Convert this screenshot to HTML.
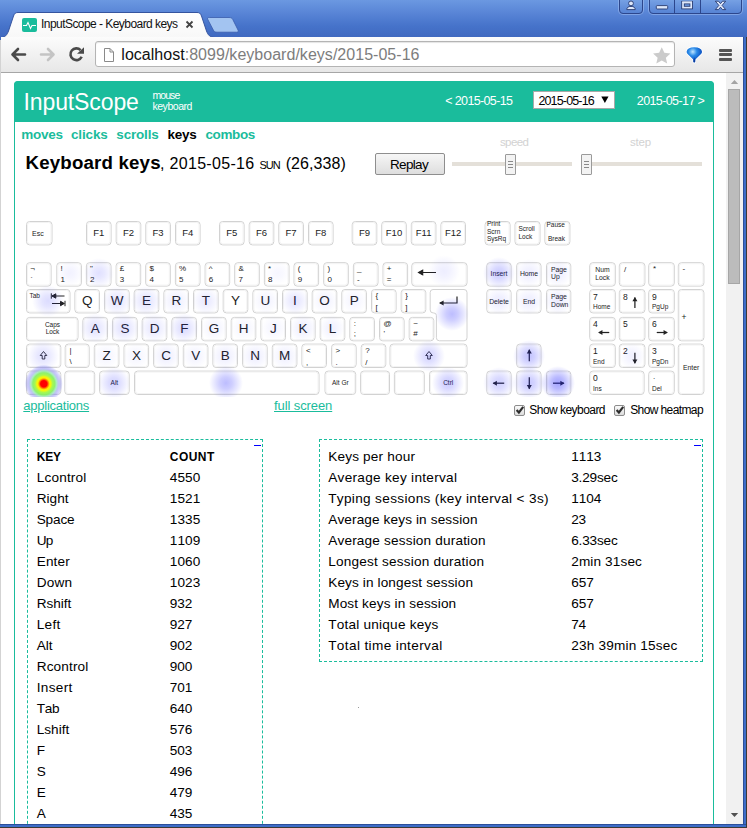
<!DOCTYPE html>
<html><head><meta charset="utf-8"><title>InputScope - Keyboard keys</title>
<style>
html,body{margin:0;padding:0}
body{width:747px;height:828px;overflow:hidden;position:relative;background:#3f68bf;font-family:"Liberation Sans","DejaVu Sans",sans-serif;}
.a{position:absolute}
.t{position:absolute;white-space:nowrap;line-height:1;font-kerning:none}
#frame{position:absolute;left:0;top:0;width:747px;height:828px;background:linear-gradient(#6b98e1 0px,#5a86d7 12px,#4673ca 26px,#4069c0 37px,#4069c0 100%);}
#page{position:absolute;left:1px;top:73px;width:742px;height:751px;background:#fff;overflow:hidden}
</style></head><body>
<div id="frame"></div>


<!-- window buttons -->
<div class="a" style="left:619px;top:-3px;width:24px;height:17px;border:1px solid #2c468c;border-radius:0 0 4px 4px;background:linear-gradient(#7ba5e6,#5683d4);box-sizing:border-box;box-shadow:0 0 0 1px rgba(160,190,240,.55)"></div>
<div class="a" style="left:649px;top:-3px;width:93px;height:17px;border:1px solid #2c468c;border-radius:0 0 4px 4px;background:linear-gradient(#7ba5e6,#5683d4);box-sizing:border-box;box-shadow:0 0 0 1px rgba(160,190,240,.55)"></div>
<div class="a" style="left:674px;top:0;width:1px;height:13px;background:#2c468c"></div>
<div class="a" style="left:700px;top:0;width:1px;height:13px;background:#2c468c"></div>
<svg class="a" style="left:619px;top:0" width="124" height="13" viewBox="0 0 124 13">
 <g fill="#dde7fa" stroke="#27396e" stroke-width="0.9">
  <circle cx="12" cy="3.4" r="2.4"/>
  <path d="M7.8 9.6 Q7.8 6.400 12 6.400 Q16.200 6.400 16.200 9.600 Z"/>
  <rect x="37.300" y="5.600" width="11.400" height="3.400" rx="0.800"/>
  <path d="M96.300 1.200 h3.200 l2 2.400 l2 -2.400 h3.200 l-3.600 4.200 l3.600 4.200 h-3.200 l-2 -2.400 l-2 2.400 h-3.200 l3.600 -4.200 z"/>
 </g>
 <rect x="64" y="2.600" width="8.200" height="5" fill="none" stroke="#27396e" stroke-width="3.400"/>
 <rect x="64" y="2.600" width="8.200" height="5" fill="none" stroke="#dde7fa" stroke-width="1.700"/><rect x="63.200" y="1.400" width="9.800" height="1.600" fill="#dde7fa"/>
</svg>

<!-- tab strip -->
<svg class="a" style="left:0;top:10px" width="260" height="28" viewBox="0 0 260 28">
 <defs><linearGradient id="tg" x1="0" y1="0" x2="0" y2="1"><stop offset="0" stop-color="#ffffff"/><stop offset="1" stop-color="#f8f8f8"/></linearGradient></defs>
 <path d="M1 27.500 C5 27.500 7 25 8.500 21 L13.500 6 C14.500 3 16 2.500 18 2.500 L197 2.500 C199 2.500 200.500 3 201.500 6 L206.500 21 C208 25 210 27.500 215 27.500 Z" fill="url(#tg)" stroke="#35549f" stroke-width="1"/>
 <path d="M207.800 9.500 C207.100 8 207.800 7.500 209.300 7.500 L229 7.500 C231 7.500 232 8 232.800 9.500 L238 20 C238.800 21.500 238 22.200 236.500 22.200 L217 22.200 C215 22.200 214 21.500 213.300 20 Z" fill="#a3c4f1" stroke="#3a5cab" stroke-width="0.800"/>
</svg>
<div class="a" style="left:21.5px;top:18px;width:15px;height:14px;background:#1abc9c;border-radius:2px"></div>
<svg class="a" style="left:21.5px;top:18px" width="15" height="14" viewBox="0 0 15 14"><path d="M1 7.500 H4.500 L6 4.500 L8.500 10.500 L10 7.500 H14" fill="none" stroke="#fff" stroke-width="1.100"/></svg>

<div class="t" id="tabtitle" style="left:41.00px;top:17.84px;font-size:12px;color:#111;letter-spacing:-0.549px;">InputScope - Keyboard keys</div>
<svg class="a" style="left:185px;top:20px" width="9" height="9" viewBox="0 0 9 9"><path d="M1.500 1.500 L7.500 7.500 M7.500 1.500 L1.500 7.500" stroke="#444" stroke-width="1.800"/></svg>

<!-- toolbar -->
<div class="a" style="left:1px;top:37px;width:742px;height:36px;background:linear-gradient(#fcfcfc,#e7e7e7);border-bottom:1px solid #a6a6a6;box-sizing:border-box;"></div>
<svg class="a" style="left:8px;top:44px" width="90" height="22" viewBox="0 0 90 22">
 <g fill="none" stroke-linecap="round" stroke-linejoin="round">
  <path d="M17 10.500 H5 M10 5 L4.500 10.500 L10 16" stroke="#4a4a4a" stroke-width="2.600"/>
  <path d="M33 10.500 H45 M40 5 L45.500 10.500 L40 16" stroke="#c4c4c4" stroke-width="2.600"/>
  <path d="M72.600 6.100 A5.900 5.900 0 1 0 73.700 12.800" stroke="#4a4a4a" stroke-width="2.600" stroke-linecap="butt"/>
 </g>
 <path d="M76 3.200 V9.800 H69 Z" fill="#4a4a4a"/>
</svg>
<div class="a" style="left:95px;top:41px;width:580px;height:26px;background:#fff;border:1px solid #b4b4b4;border-radius:3px;box-sizing:border-box;box-shadow:inset 0 1px 1px #e4e4e4"></div>
<svg class="a" style="left:102.500px;top:46.500px" width="12" height="16" viewBox="0 0 12 16"><path d="M1.500 1.500 H7 L10.500 5 V14.500 H1.500 Z M7 1.500 V5 H10.500" fill="#fff" stroke="#8a8a8a" stroke-width="1"/></svg>

<div class="t" id="url" style="left:121.30px;top:47.46px;font-size:16px;color:#111;letter-spacing:0.028px;">localhost<span style="color:#7d7d7d">:8099/keyboard/keys/2015-05-16</span></div>
<svg class="a" style="left:652px;top:45.500px" width="19.500" height="18.500" viewBox="0 0 18 17"><path d="M9 1 L11.400 6.300 L17 6.900 L12.800 10.700 L14 16.200 L9 13.400 L4 16.200 L5.200 10.700 L1 6.900 L6.600 6.300 Z" fill="#cbcbcb"/></svg>
<svg class="a" style="left:684px;top:45px" width="21" height="20" viewBox="0 0 21 20">
 <defs><radialGradient id="fg" cx="0.4" cy="0.3" r="0.6"><stop offset="0" stop-color="#bfe6ff"/><stop offset="0.45" stop-color="#2a8ae8"/><stop offset="1" stop-color="#0a4fc0"/></radialGradient></defs>
 <path d="M2.600 6.800 Q3 2.200 10.300 2.200 Q17.600 2.200 18 6.800 Q18 8 17 9 L11.600 14.200 L11 17.400 H9.600 L9 14.200 L3.600 9 Q2.600 8 2.600 6.800 Z" fill="url(#fg)" stroke="#ffffff" stroke-width="1.600" paint-order="stroke"/>
 <path d="M10.300 12 L11.200 17 H9.400 Z" fill="#0a3a9a"/>
</svg>
<div class="a" style="left:719px;top:48.500px;width:13px;height:3px;background:#555;border-radius:1px"></div>
<div class="a" style="left:719px;top:53px;width:13px;height:3px;background:#555;border-radius:1px"></div>
<div class="a" style="left:719px;top:57.700px;width:13px;height:3px;background:#555;border-radius:1px"></div>

<div id="page">
<div class="a" style="left:725px;top:0;width:17px;height:751px;background:#f1f1f1"></div>
<div class="a" style="left:727px;top:16px;width:12px;height:194.500px;background:#bcbcbc;border:1px solid #a6a6a6;box-sizing:border-box"></div>
<svg class="a" style="left:729px;top:6px" width="10" height="6"><path d="M0.800 5 L4.500 0.900 L8.200 5 Z" fill="#a3a3a3"/></svg>
<svg class="a" style="left:729px;top:739px" width="10" height="6"><path d="M0.800 1 L4.500 5.100 L8.200 1 Z" fill="#505050"/></svg>
<div class="a" style="left:13px;top:8px;width:700px;height:800px;border:1px solid #1abc9c;border-radius:4px;box-sizing:border-box"></div>
<div class="a" style="left:13px;top:8px;width:700px;height:41px;background:#1abc9c;border-radius:4px 4px 0 0"></div>
<div class="t" id="logo" style="left:22.50px;top:17.53px;font-size:23px;color:#fff;letter-spacing:-0.107px;">InputScope</div>
<div class="t" id="mouse" style="left:151.40px;top:17.11px;font-size:10.5px;color:#fff;letter-spacing:-0.9px;">mouse</div>
<div class="t" id="kbd" style="left:151.40px;top:28.11px;font-size:10.5px;color:#fff;letter-spacing:-0.449px;">keyboard</div>
<div class="t" id="prev" style="left:444.30px;top:22.42px;font-size:12.5px;color:#fff;letter-spacing:-0.643px;">&lt; 2015-05-15</div>
<div class="a" style="left:532px;top:18px;width:82px;height:18px;background:#fff;border:1px solid #a9a9a9;box-sizing:border-box"></div>
<div class="t" id="sel" style="left:537.40px;top:22.42px;font-size:12.5px;color:#000;letter-spacing:-0.844px;">2015-05-16</div>
<svg class="a" style="left:600px;top:23px" width="8" height="8"><path d="M0.300 0.500 H7.500 L3.900 7 Z" fill="#000"/></svg>
<div class="t" id="next" style="left:635.80px;top:22.42px;font-size:12.5px;color:#fff;letter-spacing:-0.601px;">2015-05-17 &gt;</div>
<div class="t" id="nav0" style="left:20.30px;top:54.57px;font-size:13.5px;color:#1abc9c;font-weight:bold;letter-spacing:-0.276px;">moves</div>
<div class="t" id="nav1" style="left:70.00px;top:54.57px;font-size:13.5px;color:#1abc9c;font-weight:bold;letter-spacing:-0.141px;">clicks</div>
<div class="t" id="nav2" style="left:115.30px;top:54.57px;font-size:13.5px;color:#1abc9c;font-weight:bold;letter-spacing:-0.175px;">scrolls</div>
<div class="t" id="nav3" style="left:166.40px;top:54.57px;font-size:13.5px;color:#000;font-weight:bold;letter-spacing:-0.209px;">keys</div>
<div class="t" id="nav4" style="left:204.40px;top:54.57px;font-size:13.5px;color:#1abc9c;font-weight:bold;letter-spacing:-0.376px;">combos</div>
<div class="t" id="tb" style="left:24.50px;top:81.17px;font-size:18.7px;color:#000;font-weight:bold;letter-spacing:0.172px;">Keyboard keys</div>
<div class="t" id="t2" style="left:159.00px;top:83.46px;font-size:16px;color:#000;letter-spacing:0.314px;">, 2015-05-16</div>
<div class="t" id="t3" style="left:258.40px;top:86.69px;font-size:11px;color:#000;letter-spacing:-0.9px;">SUN</div>
<div class="t" id="t4" style="left:284.70px;top:83.46px;font-size:16px;color:#000;letter-spacing:0.077px;">(26,338)</div>
<div class="a" style="left:374px;top:80px;width:70px;height:22px;box-sizing:border-box;border:1px solid #8e8e8e;background:linear-gradient(#f6f6f6,#dedede);border-radius:2px"></div>
<div class="t" id="replay" style="left:389.00px;top:84.57px;font-size:13.5px;color:#000;letter-spacing:-0.672px;">Replay</div>
<div class="t" id="speed" style="left:498.90px;top:64.27px;font-size:11.5px;color:#d2d2d2;letter-spacing:-0.567px;">speed</div>
<div class="t" id="step" style="left:629.00px;top:64.27px;font-size:11.5px;color:#d2d2d2;letter-spacing:-0.213px;">step</div>
<div class="a" style="left:451px;top:89px;width:120px;height:4px;background:#e4e0d9"></div>
<div class="a" style="left:580.5px;top:89px;width:120px;height:4px;background:#e4e0d9"></div>
<div class="a" style="left:504px;top:81px;width:11px;height:21px;box-sizing:border-box;border:1px solid #9a9a9a;background:#f3f3f3;border-radius:1px"></div>
<div class="a" style="left:507px;top:88px;width:5px;height:1px;background:#8a8a8a"></div>
<div class="a" style="left:507px;top:91px;width:5px;height:1px;background:#8a8a8a"></div>
<div class="a" style="left:507px;top:94px;width:5px;height:1px;background:#8a8a8a"></div>
<div class="a" style="left:580px;top:81px;width:11px;height:21px;box-sizing:border-box;border:1px solid #9a9a9a;background:#f3f3f3;border-radius:1px"></div>
<div class="a" style="left:583px;top:88px;width:5px;height:1px;background:#8a8a8a"></div>
<div class="a" style="left:583px;top:91px;width:5px;height:1px;background:#8a8a8a"></div>
<div class="a" style="left:583px;top:94px;width:5px;height:1px;background:#8a8a8a"></div>
<svg class="a" style="left:19px;top:132px" width="694" height="200" viewBox="20 205 694 200" font-family="Liberation Sans, sans-serif" fill="#222">
<defs>
<radialGradient id="hb"><stop offset="0" stop-color="#2222ff" stop-opacity="1"/><stop offset="0.35" stop-color="#2222ff" stop-opacity="0.75"/><stop offset="1" stop-color="#2222ff" stop-opacity="0"/></radialGradient>
<radialGradient id="hot"><stop offset="0" stop-color="#ff0000"/><stop offset="0.17" stop-color="#ff0000"/><stop offset="0.24" stop-color="#ff8000"/><stop offset="0.31" stop-color="#fff000"/><stop offset="0.37" stop-color="#f0f810"/><stop offset="0.46" stop-color="#a8f850"/><stop offset="0.58" stop-color="#84f060" stop-opacity="0.92"/><stop offset="0.68" stop-color="#90e4b0" stop-opacity="0.72"/><stop offset="0.79" stop-color="#8888f0" stop-opacity="0.5"/><stop offset="0.92" stop-color="#6868f8" stop-opacity="0.22"/><stop offset="1" stop-color="#5050ff" stop-opacity="0"/></radialGradient>
<clipPath id="hc"><rect x="20" y="205" width="700" height="192"/></clipPath>
</defs>
<rect x="26.5" y="221.5" width="25.5" height="23.4" rx="3.2" fill="#fff" stroke="#d2d2d2" stroke-width="1"/>
<rect x="27.5" y="222.5" width="23.5" height="21.4" rx="2.4" fill="none" stroke="#f3f3f3" stroke-width="1"/>
<rect x="86.5" y="221.5" width="24.6" height="23.4" rx="3.2" fill="#fff" stroke="#d2d2d2" stroke-width="1"/>
<rect x="87.5" y="222.5" width="22.6" height="21.4" rx="2.4" fill="none" stroke="#f3f3f3" stroke-width="1"/>
<rect x="116.2" y="221.5" width="24.6" height="23.4" rx="3.2" fill="#fff" stroke="#d2d2d2" stroke-width="1"/>
<rect x="117.2" y="222.5" width="22.6" height="21.4" rx="2.4" fill="none" stroke="#f3f3f3" stroke-width="1"/>
<rect x="145.8" y="221.5" width="24.6" height="23.4" rx="3.2" fill="#fff" stroke="#d2d2d2" stroke-width="1"/>
<rect x="146.8" y="222.5" width="22.6" height="21.4" rx="2.4" fill="none" stroke="#f3f3f3" stroke-width="1"/>
<rect x="175.5" y="221.5" width="24.6" height="23.4" rx="3.2" fill="#fff" stroke="#d2d2d2" stroke-width="1"/>
<rect x="176.5" y="222.5" width="22.6" height="21.4" rx="2.4" fill="none" stroke="#f3f3f3" stroke-width="1"/>
<rect x="219.5" y="221.5" width="24.6" height="23.4" rx="3.2" fill="#fff" stroke="#d2d2d2" stroke-width="1"/>
<rect x="220.5" y="222.5" width="22.6" height="21.4" rx="2.4" fill="none" stroke="#f3f3f3" stroke-width="1"/>
<rect x="249.2" y="221.5" width="24.6" height="23.4" rx="3.2" fill="#fff" stroke="#d2d2d2" stroke-width="1"/>
<rect x="250.2" y="222.5" width="22.6" height="21.4" rx="2.4" fill="none" stroke="#f3f3f3" stroke-width="1"/>
<rect x="278.8" y="221.5" width="24.6" height="23.4" rx="3.2" fill="#fff" stroke="#d2d2d2" stroke-width="1"/>
<rect x="279.8" y="222.5" width="22.6" height="21.4" rx="2.4" fill="none" stroke="#f3f3f3" stroke-width="1"/>
<rect x="308.5" y="221.5" width="24.6" height="23.4" rx="3.2" fill="#fff" stroke="#d2d2d2" stroke-width="1"/>
<rect x="309.5" y="222.5" width="22.6" height="21.4" rx="2.4" fill="none" stroke="#f3f3f3" stroke-width="1"/>
<rect x="352.2" y="221.5" width="24.6" height="23.4" rx="3.2" fill="#fff" stroke="#d2d2d2" stroke-width="1"/>
<rect x="353.2" y="222.5" width="22.6" height="21.4" rx="2.4" fill="none" stroke="#f3f3f3" stroke-width="1"/>
<rect x="381.7" y="221.5" width="24.6" height="23.4" rx="3.2" fill="#fff" stroke="#d2d2d2" stroke-width="1"/>
<rect x="382.7" y="222.5" width="22.6" height="21.4" rx="2.4" fill="none" stroke="#f3f3f3" stroke-width="1"/>
<rect x="411.3" y="221.5" width="24.6" height="23.4" rx="3.2" fill="#fff" stroke="#d2d2d2" stroke-width="1"/>
<rect x="412.3" y="222.5" width="22.6" height="21.4" rx="2.4" fill="none" stroke="#f3f3f3" stroke-width="1"/>
<rect x="440.9" y="221.5" width="24.6" height="23.4" rx="3.2" fill="#fff" stroke="#d2d2d2" stroke-width="1"/>
<rect x="441.9" y="222.5" width="22.6" height="21.4" rx="2.4" fill="none" stroke="#f3f3f3" stroke-width="1"/>
<rect x="485.1" y="221.5" width="25.0" height="23.4" rx="3.2" fill="#fff" stroke="#d2d2d2" stroke-width="1"/>
<rect x="486.1" y="222.5" width="23.0" height="21.4" rx="2.4" fill="none" stroke="#f3f3f3" stroke-width="1"/>
<rect x="515.0" y="221.5" width="25.0" height="23.4" rx="3.2" fill="#fff" stroke="#d2d2d2" stroke-width="1"/>
<rect x="516.0" y="222.5" width="23.0" height="21.4" rx="2.4" fill="none" stroke="#f3f3f3" stroke-width="1"/>
<rect x="544.9" y="221.5" width="25.0" height="23.4" rx="3.2" fill="#fff" stroke="#d2d2d2" stroke-width="1"/>
<rect x="545.9" y="222.5" width="23.0" height="21.4" rx="2.4" fill="none" stroke="#f3f3f3" stroke-width="1"/>
<rect x="26.5" y="262.7" width="24.6" height="23.4" rx="3.2" fill="#fff" stroke="#d2d2d2" stroke-width="1"/>
<rect x="27.5" y="263.7" width="22.6" height="21.4" rx="2.4" fill="none" stroke="#f3f3f3" stroke-width="1"/>
<rect x="56.8" y="262.7" width="24.6" height="23.4" rx="3.2" fill="#fff" stroke="#d2d2d2" stroke-width="1"/>
<rect x="57.8" y="263.7" width="22.6" height="21.4" rx="2.4" fill="none" stroke="#f3f3f3" stroke-width="1"/>
<rect x="86.4" y="262.7" width="24.6" height="23.4" rx="3.2" fill="#fff" stroke="#d2d2d2" stroke-width="1"/>
<rect x="87.4" y="263.7" width="22.6" height="21.4" rx="2.4" fill="none" stroke="#f3f3f3" stroke-width="1"/>
<rect x="116.1" y="262.7" width="24.6" height="23.4" rx="3.2" fill="#fff" stroke="#d2d2d2" stroke-width="1"/>
<rect x="117.1" y="263.7" width="22.6" height="21.4" rx="2.4" fill="none" stroke="#f3f3f3" stroke-width="1"/>
<rect x="145.7" y="262.7" width="24.6" height="23.4" rx="3.2" fill="#fff" stroke="#d2d2d2" stroke-width="1"/>
<rect x="146.7" y="263.7" width="22.6" height="21.4" rx="2.4" fill="none" stroke="#f3f3f3" stroke-width="1"/>
<rect x="175.4" y="262.7" width="24.6" height="23.4" rx="3.2" fill="#fff" stroke="#d2d2d2" stroke-width="1"/>
<rect x="176.4" y="263.7" width="22.6" height="21.4" rx="2.4" fill="none" stroke="#f3f3f3" stroke-width="1"/>
<rect x="205.1" y="262.7" width="24.6" height="23.4" rx="3.2" fill="#fff" stroke="#d2d2d2" stroke-width="1"/>
<rect x="206.1" y="263.7" width="22.6" height="21.4" rx="2.4" fill="none" stroke="#f3f3f3" stroke-width="1"/>
<rect x="234.7" y="262.7" width="24.6" height="23.4" rx="3.2" fill="#fff" stroke="#d2d2d2" stroke-width="1"/>
<rect x="235.7" y="263.7" width="22.6" height="21.4" rx="2.4" fill="none" stroke="#f3f3f3" stroke-width="1"/>
<rect x="264.4" y="262.7" width="24.6" height="23.4" rx="3.2" fill="#fff" stroke="#d2d2d2" stroke-width="1"/>
<rect x="265.4" y="263.7" width="22.6" height="21.4" rx="2.4" fill="none" stroke="#f3f3f3" stroke-width="1"/>
<rect x="294.0" y="262.7" width="24.6" height="23.4" rx="3.2" fill="#fff" stroke="#d2d2d2" stroke-width="1"/>
<rect x="295.0" y="263.7" width="22.6" height="21.4" rx="2.4" fill="none" stroke="#f3f3f3" stroke-width="1"/>
<rect x="323.7" y="262.7" width="24.6" height="23.4" rx="3.2" fill="#fff" stroke="#d2d2d2" stroke-width="1"/>
<rect x="324.7" y="263.7" width="22.6" height="21.4" rx="2.4" fill="none" stroke="#f3f3f3" stroke-width="1"/>
<rect x="353.4" y="262.7" width="24.6" height="23.4" rx="3.2" fill="#fff" stroke="#d2d2d2" stroke-width="1"/>
<rect x="354.4" y="263.7" width="22.6" height="21.4" rx="2.4" fill="none" stroke="#f3f3f3" stroke-width="1"/>
<rect x="383.0" y="262.7" width="24.6" height="23.4" rx="3.2" fill="#fff" stroke="#d2d2d2" stroke-width="1"/>
<rect x="384.0" y="263.7" width="22.6" height="21.4" rx="2.4" fill="none" stroke="#f3f3f3" stroke-width="1"/>
<rect x="411.8" y="262.7" width="55.2" height="23.4" rx="3.2" fill="#fff" stroke="#d2d2d2" stroke-width="1"/>
<rect x="412.8" y="263.7" width="53.2" height="21.4" rx="2.4" fill="none" stroke="#f3f3f3" stroke-width="1"/>
<rect x="26.5" y="289.5" width="43.5" height="23.4" rx="3.2" fill="#fff" stroke="#d2d2d2" stroke-width="1"/>
<rect x="27.5" y="290.5" width="41.5" height="21.4" rx="2.4" fill="none" stroke="#f3f3f3" stroke-width="1"/>
<rect x="74.9" y="289.5" width="24.6" height="23.4" rx="3.2" fill="#fff" stroke="#d2d2d2" stroke-width="1"/>
<rect x="75.9" y="290.5" width="22.6" height="21.4" rx="2.4" fill="none" stroke="#f3f3f3" stroke-width="1"/>
<rect x="104.6" y="289.5" width="24.6" height="23.4" rx="3.2" fill="#fff" stroke="#d2d2d2" stroke-width="1"/>
<rect x="105.6" y="290.5" width="22.6" height="21.4" rx="2.4" fill="none" stroke="#f3f3f3" stroke-width="1"/>
<rect x="134.2" y="289.5" width="24.6" height="23.4" rx="3.2" fill="#fff" stroke="#d2d2d2" stroke-width="1"/>
<rect x="135.2" y="290.5" width="22.6" height="21.4" rx="2.4" fill="none" stroke="#f3f3f3" stroke-width="1"/>
<rect x="163.9" y="289.5" width="24.6" height="23.4" rx="3.2" fill="#fff" stroke="#d2d2d2" stroke-width="1"/>
<rect x="164.9" y="290.5" width="22.6" height="21.4" rx="2.4" fill="none" stroke="#f3f3f3" stroke-width="1"/>
<rect x="193.5" y="289.5" width="24.6" height="23.4" rx="3.2" fill="#fff" stroke="#d2d2d2" stroke-width="1"/>
<rect x="194.5" y="290.5" width="22.6" height="21.4" rx="2.4" fill="none" stroke="#f3f3f3" stroke-width="1"/>
<rect x="223.2" y="289.5" width="24.6" height="23.4" rx="3.2" fill="#fff" stroke="#d2d2d2" stroke-width="1"/>
<rect x="224.2" y="290.5" width="22.6" height="21.4" rx="2.4" fill="none" stroke="#f3f3f3" stroke-width="1"/>
<rect x="252.9" y="289.5" width="24.6" height="23.4" rx="3.2" fill="#fff" stroke="#d2d2d2" stroke-width="1"/>
<rect x="253.9" y="290.5" width="22.6" height="21.4" rx="2.4" fill="none" stroke="#f3f3f3" stroke-width="1"/>
<rect x="282.5" y="289.5" width="24.6" height="23.4" rx="3.2" fill="#fff" stroke="#d2d2d2" stroke-width="1"/>
<rect x="283.5" y="290.5" width="22.6" height="21.4" rx="2.4" fill="none" stroke="#f3f3f3" stroke-width="1"/>
<rect x="312.2" y="289.5" width="24.6" height="23.4" rx="3.2" fill="#fff" stroke="#d2d2d2" stroke-width="1"/>
<rect x="313.2" y="290.5" width="22.6" height="21.4" rx="2.4" fill="none" stroke="#f3f3f3" stroke-width="1"/>
<rect x="341.8" y="289.5" width="24.6" height="23.4" rx="3.2" fill="#fff" stroke="#d2d2d2" stroke-width="1"/>
<rect x="342.8" y="290.5" width="22.6" height="21.4" rx="2.4" fill="none" stroke="#f3f3f3" stroke-width="1"/>
<rect x="371.5" y="289.5" width="24.6" height="23.4" rx="3.2" fill="#fff" stroke="#d2d2d2" stroke-width="1"/>
<rect x="372.5" y="290.5" width="22.6" height="21.4" rx="2.4" fill="none" stroke="#f3f3f3" stroke-width="1"/>
<rect x="401.2" y="289.5" width="24.6" height="23.4" rx="3.2" fill="#fff" stroke="#d2d2d2" stroke-width="1"/>
<rect x="402.2" y="290.5" width="22.6" height="21.4" rx="2.4" fill="none" stroke="#f3f3f3" stroke-width="1"/>
<rect x="26.5" y="317.4" width="51.5" height="23.4" rx="3.2" fill="#fff" stroke="#d2d2d2" stroke-width="1"/>
<rect x="27.5" y="318.4" width="49.5" height="21.4" rx="2.4" fill="none" stroke="#f3f3f3" stroke-width="1"/>
<rect x="82.9" y="317.4" width="24.6" height="23.4" rx="3.2" fill="#fff" stroke="#d2d2d2" stroke-width="1"/>
<rect x="83.9" y="318.4" width="22.6" height="21.4" rx="2.4" fill="none" stroke="#f3f3f3" stroke-width="1"/>
<rect x="112.6" y="317.4" width="24.6" height="23.4" rx="3.2" fill="#fff" stroke="#d2d2d2" stroke-width="1"/>
<rect x="113.6" y="318.4" width="22.6" height="21.4" rx="2.4" fill="none" stroke="#f3f3f3" stroke-width="1"/>
<rect x="142.2" y="317.4" width="24.6" height="23.4" rx="3.2" fill="#fff" stroke="#d2d2d2" stroke-width="1"/>
<rect x="143.2" y="318.4" width="22.6" height="21.4" rx="2.4" fill="none" stroke="#f3f3f3" stroke-width="1"/>
<rect x="171.9" y="317.4" width="24.6" height="23.4" rx="3.2" fill="#fff" stroke="#d2d2d2" stroke-width="1"/>
<rect x="172.9" y="318.4" width="22.6" height="21.4" rx="2.4" fill="none" stroke="#f3f3f3" stroke-width="1"/>
<rect x="201.5" y="317.4" width="24.6" height="23.4" rx="3.2" fill="#fff" stroke="#d2d2d2" stroke-width="1"/>
<rect x="202.5" y="318.4" width="22.6" height="21.4" rx="2.4" fill="none" stroke="#f3f3f3" stroke-width="1"/>
<rect x="231.2" y="317.4" width="24.6" height="23.4" rx="3.2" fill="#fff" stroke="#d2d2d2" stroke-width="1"/>
<rect x="232.2" y="318.4" width="22.6" height="21.4" rx="2.4" fill="none" stroke="#f3f3f3" stroke-width="1"/>
<rect x="260.9" y="317.4" width="24.6" height="23.4" rx="3.2" fill="#fff" stroke="#d2d2d2" stroke-width="1"/>
<rect x="261.9" y="318.4" width="22.6" height="21.4" rx="2.4" fill="none" stroke="#f3f3f3" stroke-width="1"/>
<rect x="290.5" y="317.4" width="24.6" height="23.4" rx="3.2" fill="#fff" stroke="#d2d2d2" stroke-width="1"/>
<rect x="291.5" y="318.4" width="22.6" height="21.4" rx="2.4" fill="none" stroke="#f3f3f3" stroke-width="1"/>
<rect x="320.2" y="317.4" width="24.6" height="23.4" rx="3.2" fill="#fff" stroke="#d2d2d2" stroke-width="1"/>
<rect x="321.2" y="318.4" width="22.6" height="21.4" rx="2.4" fill="none" stroke="#f3f3f3" stroke-width="1"/>
<rect x="349.8" y="317.4" width="24.6" height="23.4" rx="3.2" fill="#fff" stroke="#d2d2d2" stroke-width="1"/>
<rect x="350.8" y="318.4" width="22.6" height="21.4" rx="2.4" fill="none" stroke="#f3f3f3" stroke-width="1"/>
<rect x="379.5" y="317.4" width="24.6" height="23.4" rx="3.2" fill="#fff" stroke="#d2d2d2" stroke-width="1"/>
<rect x="380.5" y="318.4" width="22.6" height="21.4" rx="2.4" fill="none" stroke="#f3f3f3" stroke-width="1"/>
<rect x="409.2" y="317.4" width="24.6" height="23.4" rx="3.2" fill="#fff" stroke="#d2d2d2" stroke-width="1"/>
<rect x="410.2" y="318.4" width="22.6" height="21.4" rx="2.4" fill="none" stroke="#f3f3f3" stroke-width="1"/>
<rect x="26.5" y="344.1" width="34.3" height="23.4" rx="3.2" fill="#fff" stroke="#d2d2d2" stroke-width="1"/>
<rect x="27.5" y="345.1" width="32.3" height="21.4" rx="2.4" fill="none" stroke="#f3f3f3" stroke-width="1"/>
<rect x="65.2" y="344.1" width="24.0" height="23.4" rx="3.2" fill="#fff" stroke="#d2d2d2" stroke-width="1"/>
<rect x="66.2" y="345.1" width="22.0" height="21.4" rx="2.4" fill="none" stroke="#f3f3f3" stroke-width="1"/>
<rect x="94.3" y="344.1" width="24.6" height="23.4" rx="3.2" fill="#fff" stroke="#d2d2d2" stroke-width="1"/>
<rect x="95.3" y="345.1" width="22.6" height="21.4" rx="2.4" fill="none" stroke="#f3f3f3" stroke-width="1"/>
<rect x="124.0" y="344.1" width="24.6" height="23.4" rx="3.2" fill="#fff" stroke="#d2d2d2" stroke-width="1"/>
<rect x="125.0" y="345.1" width="22.6" height="21.4" rx="2.4" fill="none" stroke="#f3f3f3" stroke-width="1"/>
<rect x="153.6" y="344.1" width="24.6" height="23.4" rx="3.2" fill="#fff" stroke="#d2d2d2" stroke-width="1"/>
<rect x="154.6" y="345.1" width="22.6" height="21.4" rx="2.4" fill="none" stroke="#f3f3f3" stroke-width="1"/>
<rect x="183.3" y="344.1" width="24.6" height="23.4" rx="3.2" fill="#fff" stroke="#d2d2d2" stroke-width="1"/>
<rect x="184.3" y="345.1" width="22.6" height="21.4" rx="2.4" fill="none" stroke="#f3f3f3" stroke-width="1"/>
<rect x="212.9" y="344.1" width="24.6" height="23.4" rx="3.2" fill="#fff" stroke="#d2d2d2" stroke-width="1"/>
<rect x="213.9" y="345.1" width="22.6" height="21.4" rx="2.4" fill="none" stroke="#f3f3f3" stroke-width="1"/>
<rect x="242.6" y="344.1" width="24.6" height="23.4" rx="3.2" fill="#fff" stroke="#d2d2d2" stroke-width="1"/>
<rect x="243.6" y="345.1" width="22.6" height="21.4" rx="2.4" fill="none" stroke="#f3f3f3" stroke-width="1"/>
<rect x="272.3" y="344.1" width="24.6" height="23.4" rx="3.2" fill="#fff" stroke="#d2d2d2" stroke-width="1"/>
<rect x="273.3" y="345.1" width="22.6" height="21.4" rx="2.4" fill="none" stroke="#f3f3f3" stroke-width="1"/>
<rect x="301.9" y="344.1" width="24.6" height="23.4" rx="3.2" fill="#fff" stroke="#d2d2d2" stroke-width="1"/>
<rect x="302.9" y="345.1" width="22.6" height="21.4" rx="2.4" fill="none" stroke="#f3f3f3" stroke-width="1"/>
<rect x="331.6" y="344.1" width="24.6" height="23.4" rx="3.2" fill="#fff" stroke="#d2d2d2" stroke-width="1"/>
<rect x="332.6" y="345.1" width="22.6" height="21.4" rx="2.4" fill="none" stroke="#f3f3f3" stroke-width="1"/>
<rect x="361.2" y="344.1" width="24.6" height="23.4" rx="3.2" fill="#fff" stroke="#d2d2d2" stroke-width="1"/>
<rect x="362.2" y="345.1" width="22.6" height="21.4" rx="2.4" fill="none" stroke="#f3f3f3" stroke-width="1"/>
<rect x="390.0" y="344.1" width="77.0" height="23.4" rx="3.2" fill="#fff" stroke="#d2d2d2" stroke-width="1"/>
<rect x="391.0" y="345.1" width="75.0" height="21.4" rx="2.4" fill="none" stroke="#f3f3f3" stroke-width="1"/>
<rect x="26.5" y="371.1" width="34.3" height="23.4" rx="3.2" fill="#fff" stroke="#d2d2d2" stroke-width="1"/>
<rect x="27.5" y="372.1" width="32.3" height="21.4" rx="2.4" fill="none" stroke="#f3f3f3" stroke-width="1"/>
<rect x="64.8" y="371.1" width="29.9" height="23.4" rx="3.2" fill="#fff" stroke="#d2d2d2" stroke-width="1"/>
<rect x="65.8" y="372.1" width="27.9" height="21.4" rx="2.4" fill="none" stroke="#f3f3f3" stroke-width="1"/>
<rect x="99.6" y="371.1" width="29.6" height="23.4" rx="3.2" fill="#fff" stroke="#d2d2d2" stroke-width="1"/>
<rect x="100.6" y="372.1" width="27.6" height="21.4" rx="2.4" fill="none" stroke="#f3f3f3" stroke-width="1"/>
<rect x="134.5" y="371.1" width="184.5" height="23.4" rx="3.2" fill="#fff" stroke="#d2d2d2" stroke-width="1"/>
<rect x="135.5" y="372.1" width="182.5" height="21.4" rx="2.4" fill="none" stroke="#f3f3f3" stroke-width="1"/>
<rect x="325.0" y="371.1" width="30.7" height="23.4" rx="3.2" fill="#fff" stroke="#d2d2d2" stroke-width="1"/>
<rect x="326.0" y="372.1" width="28.7" height="21.4" rx="2.4" fill="none" stroke="#f3f3f3" stroke-width="1"/>
<rect x="360.6" y="371.1" width="28.9" height="23.4" rx="3.2" fill="#fff" stroke="#d2d2d2" stroke-width="1"/>
<rect x="361.6" y="372.1" width="26.9" height="21.4" rx="2.4" fill="none" stroke="#f3f3f3" stroke-width="1"/>
<rect x="394.4" y="371.1" width="29.9" height="23.4" rx="3.2" fill="#fff" stroke="#d2d2d2" stroke-width="1"/>
<rect x="395.4" y="372.1" width="27.9" height="21.4" rx="2.4" fill="none" stroke="#f3f3f3" stroke-width="1"/>
<rect x="429.5" y="371.1" width="37.5" height="23.4" rx="3.2" fill="#fff" stroke="#d2d2d2" stroke-width="1"/>
<rect x="430.5" y="372.1" width="35.5" height="21.4" rx="2.4" fill="none" stroke="#f3f3f3" stroke-width="1"/>
<rect x="486.8" y="262.7" width="24.3" height="23.4" rx="3.2" fill="#fff" stroke="#d2d2d2" stroke-width="1"/>
<rect x="487.8" y="263.7" width="22.3" height="21.4" rx="2.4" fill="none" stroke="#f3f3f3" stroke-width="1"/>
<rect x="516.7" y="262.7" width="24.3" height="23.4" rx="3.2" fill="#fff" stroke="#d2d2d2" stroke-width="1"/>
<rect x="517.7" y="263.7" width="22.3" height="21.4" rx="2.4" fill="none" stroke="#f3f3f3" stroke-width="1"/>
<rect x="546.5" y="262.7" width="24.3" height="23.4" rx="3.2" fill="#fff" stroke="#d2d2d2" stroke-width="1"/>
<rect x="547.5" y="263.7" width="22.3" height="21.4" rx="2.4" fill="none" stroke="#f3f3f3" stroke-width="1"/>
<rect x="486.8" y="289.5" width="24.3" height="23.4" rx="3.2" fill="#fff" stroke="#d2d2d2" stroke-width="1"/>
<rect x="487.8" y="290.5" width="22.3" height="21.4" rx="2.4" fill="none" stroke="#f3f3f3" stroke-width="1"/>
<rect x="516.7" y="289.5" width="24.3" height="23.4" rx="3.2" fill="#fff" stroke="#d2d2d2" stroke-width="1"/>
<rect x="517.7" y="290.5" width="22.3" height="21.4" rx="2.4" fill="none" stroke="#f3f3f3" stroke-width="1"/>
<rect x="546.5" y="289.5" width="24.3" height="23.4" rx="3.2" fill="#fff" stroke="#d2d2d2" stroke-width="1"/>
<rect x="547.5" y="290.5" width="22.3" height="21.4" rx="2.4" fill="none" stroke="#f3f3f3" stroke-width="1"/>
<rect x="516.7" y="344.1" width="24.3" height="23.4" rx="3.2" fill="#fff" stroke="#d2d2d2" stroke-width="1"/>
<rect x="517.7" y="345.1" width="22.3" height="21.4" rx="2.4" fill="none" stroke="#f3f3f3" stroke-width="1"/>
<rect x="486.8" y="371.1" width="24.3" height="23.4" rx="3.2" fill="#fff" stroke="#d2d2d2" stroke-width="1"/>
<rect x="487.8" y="372.1" width="22.3" height="21.4" rx="2.4" fill="none" stroke="#f3f3f3" stroke-width="1"/>
<rect x="516.7" y="371.1" width="24.3" height="23.4" rx="3.2" fill="#fff" stroke="#d2d2d2" stroke-width="1"/>
<rect x="517.7" y="372.1" width="22.3" height="21.4" rx="2.4" fill="none" stroke="#f3f3f3" stroke-width="1"/>
<rect x="546.5" y="371.1" width="24.3" height="23.4" rx="3.2" fill="#fff" stroke="#d2d2d2" stroke-width="1"/>
<rect x="547.5" y="372.1" width="22.3" height="21.4" rx="2.4" fill="none" stroke="#f3f3f3" stroke-width="1"/>
<rect x="589.7" y="262.7" width="25.6" height="23.4" rx="3.2" fill="#fff" stroke="#d2d2d2" stroke-width="1"/>
<rect x="590.7" y="263.7" width="23.6" height="21.4" rx="2.4" fill="none" stroke="#f3f3f3" stroke-width="1"/>
<rect x="619.3" y="262.7" width="25.6" height="23.4" rx="3.2" fill="#fff" stroke="#d2d2d2" stroke-width="1"/>
<rect x="620.3" y="263.7" width="23.6" height="21.4" rx="2.4" fill="none" stroke="#f3f3f3" stroke-width="1"/>
<rect x="648.7" y="262.7" width="25.6" height="23.4" rx="3.2" fill="#fff" stroke="#d2d2d2" stroke-width="1"/>
<rect x="649.7" y="263.7" width="23.6" height="21.4" rx="2.4" fill="none" stroke="#f3f3f3" stroke-width="1"/>
<rect x="678.3" y="262.7" width="25.6" height="23.4" rx="3.2" fill="#fff" stroke="#d2d2d2" stroke-width="1"/>
<rect x="679.3" y="263.7" width="23.6" height="21.4" rx="2.4" fill="none" stroke="#f3f3f3" stroke-width="1"/>
<rect x="589.7" y="289.5" width="25.6" height="23.4" rx="3.2" fill="#fff" stroke="#d2d2d2" stroke-width="1"/>
<rect x="590.7" y="290.5" width="23.6" height="21.4" rx="2.4" fill="none" stroke="#f3f3f3" stroke-width="1"/>
<rect x="619.3" y="289.5" width="25.6" height="23.4" rx="3.2" fill="#fff" stroke="#d2d2d2" stroke-width="1"/>
<rect x="620.3" y="290.5" width="23.6" height="21.4" rx="2.4" fill="none" stroke="#f3f3f3" stroke-width="1"/>
<rect x="648.7" y="289.5" width="25.6" height="23.4" rx="3.2" fill="#fff" stroke="#d2d2d2" stroke-width="1"/>
<rect x="649.7" y="290.5" width="23.6" height="21.4" rx="2.4" fill="none" stroke="#f3f3f3" stroke-width="1"/>
<rect x="589.7" y="317.4" width="25.6" height="23.4" rx="3.2" fill="#fff" stroke="#d2d2d2" stroke-width="1"/>
<rect x="590.7" y="318.4" width="23.6" height="21.4" rx="2.4" fill="none" stroke="#f3f3f3" stroke-width="1"/>
<rect x="619.3" y="317.4" width="25.6" height="23.4" rx="3.2" fill="#fff" stroke="#d2d2d2" stroke-width="1"/>
<rect x="620.3" y="318.4" width="23.6" height="21.4" rx="2.4" fill="none" stroke="#f3f3f3" stroke-width="1"/>
<rect x="648.7" y="317.4" width="25.6" height="23.4" rx="3.2" fill="#fff" stroke="#d2d2d2" stroke-width="1"/>
<rect x="649.7" y="318.4" width="23.6" height="21.4" rx="2.4" fill="none" stroke="#f3f3f3" stroke-width="1"/>
<rect x="589.7" y="344.1" width="25.6" height="23.4" rx="3.2" fill="#fff" stroke="#d2d2d2" stroke-width="1"/>
<rect x="590.7" y="345.1" width="23.6" height="21.4" rx="2.4" fill="none" stroke="#f3f3f3" stroke-width="1"/>
<rect x="619.3" y="344.1" width="25.6" height="23.4" rx="3.2" fill="#fff" stroke="#d2d2d2" stroke-width="1"/>
<rect x="620.3" y="345.1" width="23.6" height="21.4" rx="2.4" fill="none" stroke="#f3f3f3" stroke-width="1"/>
<rect x="648.7" y="344.1" width="25.6" height="23.4" rx="3.2" fill="#fff" stroke="#d2d2d2" stroke-width="1"/>
<rect x="649.7" y="345.1" width="23.6" height="21.4" rx="2.4" fill="none" stroke="#f3f3f3" stroke-width="1"/>
<rect x="678.3" y="289.5" width="25.6" height="51.3" rx="3.2" fill="#fff" stroke="#d2d2d2" stroke-width="1"/>
<rect x="679.3" y="290.5" width="23.6" height="49.3" rx="2.4" fill="none" stroke="#f3f3f3" stroke-width="1"/>
<rect x="678.3" y="344.1" width="25.6" height="50.4" rx="3.2" fill="#fff" stroke="#d2d2d2" stroke-width="1"/>
<rect x="679.3" y="345.1" width="23.6" height="48.4" rx="2.4" fill="none" stroke="#f3f3f3" stroke-width="1"/>
<rect x="589.7" y="371.1" width="54.4" height="23.4" rx="3.2" fill="#fff" stroke="#d2d2d2" stroke-width="1"/>
<rect x="590.7" y="372.1" width="52.4" height="21.4" rx="2.4" fill="none" stroke="#f3f3f3" stroke-width="1"/>
<rect x="648.7" y="371.1" width="25.6" height="23.4" rx="3.2" fill="#fff" stroke="#d2d2d2" stroke-width="1"/>
<rect x="649.7" y="372.1" width="23.6" height="21.4" rx="2.4" fill="none" stroke="#f3f3f3" stroke-width="1"/>
<path d="M433 289.5 H464 Q467 289.5 467 292.5 V337.79999999999995 Q467 340.79999999999995 464 340.79999999999995 H439.4 Q436.4 340.79999999999995 436.4 337.79999999999995 V315.4 Q436.4 312.9 433.4 312.9 H433 Q430.200 312.9 430.200 309.9 V292.5 Q430.200 289.5 433 289.5 Z" fill="#fff" stroke="#d2d2d2"/>
<text x="32.0" y="236.0" font-size="7">Esc</text>
<text x="98.8" y="236.2" font-size="9.5" text-anchor="middle">F1</text>
<text x="128.5" y="236.2" font-size="9.5" text-anchor="middle">F2</text>
<text x="158.1" y="236.2" font-size="9.5" text-anchor="middle">F3</text>
<text x="187.8" y="236.2" font-size="9.5" text-anchor="middle">F4</text>
<text x="231.8" y="236.2" font-size="9.5" text-anchor="middle">F5</text>
<text x="261.5" y="236.2" font-size="9.5" text-anchor="middle">F6</text>
<text x="291.1" y="236.2" font-size="9.5" text-anchor="middle">F7</text>
<text x="320.8" y="236.2" font-size="9.5" text-anchor="middle">F8</text>
<text x="364.5" y="236.2" font-size="9.5" text-anchor="middle">F9</text>
<text x="394.0" y="236.2" font-size="9.5" text-anchor="middle">F10</text>
<text x="423.6" y="236.2" font-size="9.5" text-anchor="middle">F11</text>
<text x="453.2" y="236.2" font-size="9.5" text-anchor="middle">F12</text>
<text x="487.0" y="226.3" font-size="6.5">Print</text>
<text x="487.0" y="233.8" font-size="6.5">Scrn</text>
<text x="487.0" y="241.3" font-size="6.5">SysRq</text>
<text x="518.5" y="230.7" font-size="6.5">Scroll</text>
<text x="518.5" y="238.7" font-size="6.5">Lock</text>
<text x="546.5" y="226.5" font-size="6.5">Pause</text>
<text x="548.0" y="240.7" font-size="6.5">Break</text>
<text x="30.2" y="270.6" font-size="8">¬</text>
<text x="30.2" y="282.3" font-size="8">`</text>
<text x="60.5" y="270.6" font-size="8">!</text>
<text x="60.5" y="282.3" font-size="8">1</text>
<text x="90.1" y="270.6" font-size="8">"</text>
<text x="90.1" y="282.3" font-size="8">2</text>
<text x="119.8" y="270.6" font-size="8">£</text>
<text x="119.8" y="282.3" font-size="8">3</text>
<text x="149.4" y="270.6" font-size="8">$</text>
<text x="149.4" y="282.3" font-size="8">4</text>
<text x="179.1" y="270.6" font-size="8">%</text>
<text x="179.1" y="282.3" font-size="8">5</text>
<text x="208.8" y="270.6" font-size="8">^</text>
<text x="208.8" y="282.3" font-size="8">6</text>
<text x="238.4" y="270.6" font-size="8">&amp;</text>
<text x="238.4" y="282.3" font-size="8">7</text>
<text x="268.1" y="270.6" font-size="8">*</text>
<text x="268.1" y="282.3" font-size="8">8</text>
<text x="297.7" y="270.6" font-size="8">(</text>
<text x="297.7" y="282.3" font-size="8">9</text>
<text x="327.4" y="270.6" font-size="8">)</text>
<text x="327.4" y="282.3" font-size="8">0</text>
<text x="357.1" y="270.6" font-size="8">_</text>
<text x="357.1" y="282.3" font-size="8">-</text>
<text x="386.7" y="270.6" font-size="8">+</text>
<text x="386.7" y="282.3" font-size="8">=</text>
<path d="M419 272.500 H436 M418.500 272.500 l4.200 -2.400 v4.800 z" stroke="#222" stroke-width="1.100" fill="#222"/>
<text x="29.5" y="298.2" font-size="6.5">Tab</text>
<path d="M52 296 H64.500 M52 296 l3.800 -2.200 v4.400 z M51.300 293.300 v5.400" stroke="#222" stroke-width="1" fill="#222"/>
<path d="M52 303.500 H64.300 M64.300 303.500 l-3.800 -2.200 v4.400 z M65 300.800 v5.400" stroke="#222" stroke-width="1" fill="#222"/>
<text x="87.3" y="305.3" font-size="13.5" text-anchor="middle">Q</text>
<text x="117.0" y="305.3" font-size="13.5" text-anchor="middle">W</text>
<text x="146.6" y="305.3" font-size="13.5" text-anchor="middle">E</text>
<text x="176.3" y="305.3" font-size="13.5" text-anchor="middle">R</text>
<text x="205.9" y="305.3" font-size="13.5" text-anchor="middle">T</text>
<text x="235.6" y="305.3" font-size="13.5" text-anchor="middle">Y</text>
<text x="265.3" y="305.3" font-size="13.5" text-anchor="middle">U</text>
<text x="294.9" y="305.3" font-size="13.5" text-anchor="middle">I</text>
<text x="324.6" y="305.3" font-size="13.5" text-anchor="middle">O</text>
<text x="354.2" y="305.3" font-size="13.5" text-anchor="middle">P</text>
<text x="375.5" y="298.3" font-size="8">{</text>
<text x="375.5" y="309.5" font-size="8">[</text>
<text x="405.2" y="298.3" font-size="8">}</text>
<text x="405.2" y="309.5" font-size="8">]</text>
<path d="M440 303 H457 V296.600" stroke="#222" stroke-width="1.200" fill="none"/><path d="M439 303 l4.600 -2.600 v5.200 z" fill="#222"/>
<text x="52.5" y="326.5" font-size="6.5" text-anchor="middle">Caps</text>
<text x="52.5" y="334.0" font-size="6.5" text-anchor="middle">Lock</text>
<text x="95.3" y="333.2" font-size="13.5" text-anchor="middle">A</text>
<text x="125.0" y="333.2" font-size="13.5" text-anchor="middle">S</text>
<text x="154.6" y="333.2" font-size="13.5" text-anchor="middle">D</text>
<text x="184.3" y="333.2" font-size="13.5" text-anchor="middle">F</text>
<text x="213.9" y="333.2" font-size="13.5" text-anchor="middle">G</text>
<text x="243.6" y="333.2" font-size="13.5" text-anchor="middle">H</text>
<text x="273.3" y="333.2" font-size="13.5" text-anchor="middle">J</text>
<text x="302.9" y="333.2" font-size="13.5" text-anchor="middle">K</text>
<text x="332.6" y="333.2" font-size="13.5" text-anchor="middle">L</text>
<text x="353.8" y="325.5" font-size="8">:</text>
<text x="353.8" y="336.3" font-size="8">;</text>
<text x="383.5" y="325.5" font-size="8">@</text>
<text x="383.5" y="336.3" font-size="8">'</text>
<text x="413.2" y="325.5" font-size="8">~</text>
<text x="413.2" y="336.3" font-size="8">#</text>
<path d="M43.500 351.500 l3.300 4 h-2 v3.500 h-2.600 v-3.500 h-2 z" fill="none" stroke="#222" stroke-width="0.900"/>
<text x="69.5" y="352.5" font-size="8">|</text>
<text x="69.5" y="364.0" font-size="8">\</text>
<text x="106.7" y="360.3" font-size="13.5" text-anchor="middle">Z</text>
<text x="136.4" y="360.3" font-size="13.5" text-anchor="middle">X</text>
<text x="166.0" y="360.3" font-size="13.5" text-anchor="middle">C</text>
<text x="195.7" y="360.3" font-size="13.5" text-anchor="middle">V</text>
<text x="225.3" y="360.3" font-size="13.5" text-anchor="middle">B</text>
<text x="255.0" y="360.3" font-size="13.5" text-anchor="middle">N</text>
<text x="284.7" y="360.3" font-size="13.5" text-anchor="middle">M</text>
<text x="305.9" y="353.0" font-size="8">&lt;</text>
<text x="305.9" y="364.5" font-size="8">,</text>
<text x="335.6" y="353.0" font-size="8">&gt;</text>
<text x="335.6" y="364.5" font-size="8">.</text>
<text x="365.2" y="353.0" font-size="8">?</text>
<text x="365.2" y="364.5" font-size="8">/</text>
<path d="M429 351.500 l3.300 4 h-2 v3.500 h-2.600 v-3.500 h-2 z" fill="none" stroke="#222" stroke-width="0.900"/>
<text x="114.4" y="385.3" font-size="6.5" text-anchor="middle">Alt</text>
<text x="340.3" y="385.3" font-size="6.5" text-anchor="middle">Alt Gr</text>
<text x="448.2" y="385.3" font-size="6.5" text-anchor="middle">Ctrl</text>
<text x="499.0" y="275.8" font-size="6.8" text-anchor="middle">Insert</text>
<text x="529.0" y="275.8" font-size="6.8" text-anchor="middle">Home</text>
<text x="551.0" y="271.5" font-size="6.8">Page</text>
<text x="551.0" y="279.0" font-size="6.8">Up</text>
<text x="499.0" y="303.5" font-size="6.8" text-anchor="middle">Delete</text>
<text x="529.0" y="303.5" font-size="6.8" text-anchor="middle">End</text>
<text x="551.0" y="299.0" font-size="6.8">Page</text>
<text x="551.0" y="306.5" font-size="6.8">Down</text>
<path d="M529.3 349.75 V361.25" stroke="#222" stroke-width="1.25"/><path d="M529.3 349.25 l-2.5 4.2 h5.0 z" fill="#222"/>
<path d="M493.2 383.2 H504.2" stroke="#222" stroke-width="1.25"/><path d="M492.7 383.2 l4.2 -2.5 v5.0 z" fill="#222"/>
<path d="M529.3 377.25 V388.75" stroke="#222" stroke-width="1.25"/><path d="M529.3 389.25 l-2.5 -4.2 h5.0 z" fill="#222"/>
<path d="M553.0 383.2 H564.0" stroke="#222" stroke-width="1.25"/><path d="M564.5 383.2 l-4.2 -2.5 v5.0 z" fill="#222"/>
<text x="602.5" y="272.0" font-size="6.8" text-anchor="middle">Num</text>
<text x="602.5" y="280.0" font-size="6.8" text-anchor="middle">Lock</text>
<text x="624.0" y="272.0" font-size="8">/</text>
<text x="653.0" y="271.0" font-size="8">*</text>
<text x="682.5" y="271.0" font-size="8">-</text>
<text x="593.0" y="299.5" font-size="8.5">7</text>
<text x="593.0" y="309.3" font-size="6.5">Home</text>
<text x="623.0" y="299.5" font-size="8.5">8</text>
<path d="M634.9 297.45 V307.95" stroke="#222" stroke-width="1.25"/><path d="M634.9 296.95 l-2.5 4.2 h5.0 z" fill="#222"/>
<text x="652.0" y="299.5" font-size="8.5">9</text>
<text x="652.0" y="309.3" font-size="6.5">PgUp</text>
<text x="681.5" y="319.5" font-size="8.5">+</text>
<text x="593.0" y="327.0" font-size="8.5">4</text>
<path d="M598.75 332.5 H609.25" stroke="#222" stroke-width="1.25"/><path d="M598.25 332.5 l4.2 -2.5 v5.0 z" fill="#222"/>
<text x="623.0" y="327.0" font-size="8.5">5</text>
<text x="652.0" y="327.0" font-size="8.5">6</text>
<path d="M656.75 332.5 H667.25" stroke="#222" stroke-width="1.25"/><path d="M667.75 332.5 l-4.2 -2.5 v5.0 z" fill="#222"/>
<text x="593.0" y="354.0" font-size="8.5">1</text>
<text x="593.0" y="364.2" font-size="6.5">End</text>
<text x="623.0" y="354.0" font-size="8.5">2</text>
<path d="M634.9 352.75 V363.25" stroke="#222" stroke-width="1.25"/><path d="M634.9 363.75 l-2.5 -4.2 h5.0 z" fill="#222"/>
<text x="652.0" y="354.0" font-size="8.5">3</text>
<text x="652.0" y="364.2" font-size="6.5">PgDn</text>
<text x="683.0" y="370.3" font-size="6.8">Enter</text>
<text x="593.0" y="381.0" font-size="8.5">0</text>
<text x="593.0" y="391.0" font-size="6.5">Ins</text>
<text x="653.0" y="379.0" font-size="8">.</text>
<text x="652.0" y="391.0" font-size="6.5">Del</text>
<g clip-path="url(#hc)">
<circle cx="558" cy="383" r="17" fill="url(#hb)" opacity="0.42"/>
<circle cx="226" cy="383" r="17" fill="url(#hb)" opacity="0.3"/>
<circle cx="529" cy="356" r="16" fill="url(#hb)" opacity="0.28"/>
<circle cx="452" cy="314" r="17" fill="url(#hb)" opacity="0.3"/>
<circle cx="529" cy="383" r="16" fill="url(#hb)" opacity="0.26"/>
<circle cx="429" cy="356" r="16" fill="url(#hb)" opacity="0.2"/>
<circle cx="499" cy="383" r="16" fill="url(#hb)" opacity="0.22"/>
<circle cx="114" cy="383" r="16" fill="url(#hb)" opacity="0.2"/>
<circle cx="448" cy="383" r="16" fill="url(#hb)" opacity="0.24"/>
<circle cx="499" cy="273" r="16" fill="url(#hb)" opacity="0.24"/>
<circle cx="48" cy="301" r="16" fill="url(#hb)" opacity="0.16"/>
<circle cx="43" cy="356" r="16" fill="url(#hb)" opacity="0.14"/>
<circle cx="184" cy="328" r="15" fill="url(#hb)" opacity="0.16"/>
<circle cx="124" cy="328" r="15" fill="url(#hb)" opacity="0.14"/>
<circle cx="146" cy="301" r="15" fill="url(#hb)" opacity="0.13"/>
<circle cx="95" cy="328" r="15" fill="url(#hb)" opacity="0.13"/>
<circle cx="117" cy="301" r="15" fill="url(#hb)" opacity="0.12"/>
<circle cx="154" cy="328" r="15" fill="url(#hb)" opacity="0.11"/>
<circle cx="206" cy="301" r="14" fill="url(#hb)" opacity="0.1"/>
<circle cx="295" cy="301" r="14" fill="url(#hb)" opacity="0.12"/>
<circle cx="99" cy="273" r="15" fill="url(#hb)" opacity="0.14"/>
<circle cx="444" cy="271" r="16" fill="url(#hb)" opacity="0.08"/>
<circle cx="176" cy="301" r="14" fill="url(#hb)" opacity="0.08"/>
<circle cx="166" cy="356" r="14" fill="url(#hb)" opacity="0.08"/>
<circle cx="225" cy="356" r="14" fill="url(#hb)" opacity="0.08"/>
<circle cx="255" cy="356" r="14" fill="url(#hb)" opacity="0.08"/>
<circle cx="285" cy="356" r="14" fill="url(#hb)" opacity="0.07"/>
<circle cx="303" cy="328" r="14" fill="url(#hb)" opacity="0.08"/>
<circle cx="332" cy="328" r="13" fill="url(#hb)" opacity="0.07"/>
<circle cx="499" cy="301" r="14" fill="url(#hb)" opacity="0.09"/>
<circle cx="529" cy="273" r="14" fill="url(#hb)" opacity="0.08"/>
<circle cx="529" cy="301" r="14" fill="url(#hb)" opacity="0.08"/>
<circle cx="558" cy="273" r="14" fill="url(#hb)" opacity="0.08"/>
<circle cx="558" cy="301" r="14" fill="url(#hb)" opacity="0.09"/>
<circle cx="325" cy="301" r="13" fill="url(#hb)" opacity="0.06"/>
<circle cx="354" cy="301" r="13" fill="url(#hb)" opacity="0.05"/>
<circle cx="274" cy="328" r="13" fill="url(#hb)" opacity="0.05"/>
<circle cx="244" cy="328" r="13" fill="url(#hb)" opacity="0.05"/>
<circle cx="214" cy="328" r="13" fill="url(#hb)" opacity="0.06"/>
<circle cx="266" cy="301" r="13" fill="url(#hb)" opacity="0.06"/>
<circle cx="195" cy="356" r="13" fill="url(#hb)" opacity="0.06"/>
<circle cx="136" cy="356" r="13" fill="url(#hb)" opacity="0.05"/>
<circle cx="106" cy="356" r="13" fill="url(#hb)" opacity="0.05"/>
<circle cx="70" cy="273" r="13" fill="url(#hb)" opacity="0.06"/>
<circle cx="278" cy="273" r="12" fill="url(#hb)" opacity="0.04"/>
<circle cx="632" cy="356" r="13" fill="url(#hb)" opacity="0.07"/>
<circle cx="43.800" cy="383.800" r="19" fill="url(#hot)"/>
</g>
</svg>
<div class="t" id="apps" style="left:22.30px;top:326.00px;font-size:13px;color:#1abc9c;text-decoration:underline;letter-spacing:-0.238px;">applications</div>
<div class="t" id="full" style="left:273.00px;top:326.00px;font-size:13px;color:#1abc9c;text-decoration:underline;letter-spacing:-0.095px;">full screen</div>
<div class="a" style="left:512.5px;top:331.5px;width:11px;height:11px;box-sizing:border-box;border:1px solid #8c8c8c;border-radius:2px;background:linear-gradient(#fafafa,#dcdcdc)"></div>
<svg class="a" style="left:512.5px;top:331px" width="12" height="12" viewBox="0 0 12 12"><path d="M2.600 6 L4.900 8.500 L9.200 2.800" fill="none" stroke="#2c2c2c" stroke-width="2.100"/></svg>
<div class="t" id="cb0" style="left:528.30px;top:330.84px;font-size:12px;color:#000;letter-spacing:-0.54px;">Show keyboard</div>
<div class="a" style="left:613.2px;top:331.5px;width:11px;height:11px;box-sizing:border-box;border:1px solid #8c8c8c;border-radius:2px;background:linear-gradient(#fafafa,#dcdcdc)"></div>
<svg class="a" style="left:613.2px;top:331px" width="12" height="12" viewBox="0 0 12 12"><path d="M2.600 6 L4.900 8.500 L9.200 2.800" fill="none" stroke="#2c2c2c" stroke-width="2.100"/></svg>
<div class="t" id="cb1" style="left:629.20px;top:330.84px;font-size:12px;color:#000;letter-spacing:-0.604px;">Show heatmap</div>
<div class="a" style="left:26px;top:366px;width:236px;height:420px;box-sizing:border-box;border:1px dashed #1abc9c"></div>
<div class="a" style="left:318px;top:366px;width:384px;height:223px;box-sizing:border-box;border:1px dashed #1abc9c"></div>
<div class="a" style="left:253px;top:372px;width:7px;height:1px;background:#0000ff"></div>
<div class="a" style="left:693px;top:372px;width:7px;height:1px;background:#0000ff"></div>
<div class="t" id="hk" style="left:35.70px;top:377.84px;font-size:12px;color:#000;font-weight:bold;letter-spacing:-0.192px;">KEY</div>
<div class="t" id="hc" style="left:168.80px;top:377.84px;font-size:12px;color:#000;font-weight:bold;letter-spacing:0.446px;">COUNT</div>
<div class="t" id="k0" style="left:35.70px;top:398.49px;font-size:13.6px;color:#000;letter-spacing:0.18px;">Lcontrol</div>
<div class="t" id="c0" style="left:168.80px;top:398.49px;font-size:13.6px;color:#000;letter-spacing:0.063px;">4550</div>
<div class="t" id="k1" style="left:35.70px;top:419.49px;font-size:13.6px;color:#000;letter-spacing:0.016px;">Right</div>
<div class="t" id="c1" style="left:168.80px;top:419.49px;font-size:13.6px;color:#000;letter-spacing:0.063px;">1521</div>
<div class="t" id="k2" style="left:35.70px;top:440.49px;font-size:13.6px;color:#000;letter-spacing:-0.147px;">Space</div>
<div class="t" id="c2" style="left:168.80px;top:440.49px;font-size:13.6px;color:#000;letter-spacing:0.063px;">1335</div>
<div class="t" id="k3" style="left:35.70px;top:461.49px;font-size:13.6px;color:#000;letter-spacing:-0.689px;">Up</div>
<div class="t" id="c3" style="left:168.80px;top:461.49px;font-size:13.6px;color:#000;letter-spacing:0.063px;">1109</div>
<div class="t" id="k4" style="left:35.70px;top:482.49px;font-size:13.6px;color:#000;letter-spacing:0.143px;">Enter</div>
<div class="t" id="c4" style="left:168.80px;top:482.49px;font-size:13.6px;color:#000;letter-spacing:0.063px;">1060</div>
<div class="t" id="k5" style="left:35.70px;top:503.49px;font-size:13.6px;color:#000;letter-spacing:0.187px;">Down</div>
<div class="t" id="c5" style="left:168.80px;top:503.49px;font-size:13.6px;color:#000;letter-spacing:0.063px;">1023</div>
<div class="t" id="k6" style="left:35.70px;top:524.49px;font-size:13.6px;color:#000;letter-spacing:-0.04px;">Rshift</div>
<div class="t" id="c6" style="left:168.80px;top:524.49px;font-size:13.6px;color:#000;letter-spacing:-0.028px;">932</div>
<div class="t" id="k7" style="left:35.70px;top:545.49px;font-size:13.6px;color:#000;letter-spacing:0.306px;">Left</div>
<div class="t" id="c7" style="left:168.80px;top:545.49px;font-size:13.6px;color:#000;letter-spacing:-0.028px;">927</div>
<div class="t" id="k8" style="left:35.70px;top:566.49px;font-size:13.6px;color:#000;letter-spacing:0.046px;">Alt</div>
<div class="t" id="c8" style="left:168.80px;top:566.49px;font-size:13.6px;color:#000;letter-spacing:-0.028px;">902</div>
<div class="t" id="k9" style="left:35.70px;top:587.49px;font-size:13.6px;color:#000;letter-spacing:0.136px;">Rcontrol</div>
<div class="t" id="c9" style="left:168.80px;top:587.49px;font-size:13.6px;color:#000;letter-spacing:-0.028px;">900</div>
<div class="t" id="k10" style="left:35.70px;top:608.49px;font-size:13.6px;color:#000;letter-spacing:0.319px;">Insert</div>
<div class="t" id="c10" style="left:168.80px;top:608.49px;font-size:13.6px;color:#000;letter-spacing:-0.028px;">701</div>
<div class="t" id="k11" style="left:35.70px;top:629.49px;font-size:13.6px;color:#000;letter-spacing:-0.308px;">Tab</div>
<div class="t" id="c11" style="left:168.80px;top:629.49px;font-size:13.6px;color:#000;letter-spacing:-0.028px;">640</div>
<div class="t" id="k12" style="left:35.70px;top:650.49px;font-size:13.6px;color:#000;letter-spacing:0.035px;">Lshift</div>
<div class="t" id="c12" style="left:168.80px;top:650.49px;font-size:13.6px;color:#000;letter-spacing:-0.028px;">576</div>
<div class="t" id="k13" style="left:35.70px;top:671.49px;font-size:13.6px;color:#000;">F</div>
<div class="t" id="c13" style="left:168.80px;top:671.49px;font-size:13.6px;color:#000;letter-spacing:-0.028px;">503</div>
<div class="t" id="k14" style="left:35.70px;top:692.49px;font-size:13.6px;color:#000;">S</div>
<div class="t" id="c14" style="left:168.80px;top:692.49px;font-size:13.6px;color:#000;letter-spacing:-0.028px;">496</div>
<div class="t" id="k15" style="left:35.70px;top:713.49px;font-size:13.6px;color:#000;">E</div>
<div class="t" id="c15" style="left:168.80px;top:713.49px;font-size:13.6px;color:#000;letter-spacing:-0.028px;">479</div>
<div class="t" id="k16" style="left:35.70px;top:734.49px;font-size:13.6px;color:#000;">A</div>
<div class="t" id="c16" style="left:168.80px;top:734.49px;font-size:13.6px;color:#000;letter-spacing:-0.028px;">435</div>
<div class="t" id="s0" style="left:327.20px;top:377.49px;font-size:13.6px;color:#000;letter-spacing:0.175px;">Keys per hour</div>
<div class="t" id="v0" style="left:570.20px;top:377.49px;font-size:13.6px;color:#000;letter-spacing:-0.034px;">1113</div>
<div class="t" id="s1" style="left:327.20px;top:398.49px;font-size:13.6px;color:#000;letter-spacing:0.297px;">Average key interval</div>
<div class="t" id="v1" style="left:570.20px;top:398.49px;font-size:13.6px;color:#000;letter-spacing:-0.173px;">3.29sec</div>
<div class="t" id="s2" style="left:327.20px;top:419.49px;font-size:13.6px;color:#000;letter-spacing:0.337px;">Typing sessions (key interval &lt; 3s)</div>
<div class="t" id="v2" style="left:570.20px;top:419.49px;font-size:13.6px;color:#000;letter-spacing:-0.034px;">1104</div>
<div class="t" id="s3" style="left:327.20px;top:440.49px;font-size:13.6px;color:#000;letter-spacing:0.127px;">Average keys in session</div>
<div class="t" id="v3" style="left:570.20px;top:440.49px;font-size:13.6px;color:#000;letter-spacing:-0.156px;">23</div>
<div class="t" id="s4" style="left:327.20px;top:461.49px;font-size:13.6px;color:#000;letter-spacing:0.175px;">Average session duration</div>
<div class="t" id="v4" style="left:570.20px;top:461.49px;font-size:13.6px;color:#000;letter-spacing:-0.173px;">6.33sec</div>
<div class="t" id="s5" style="left:327.20px;top:482.49px;font-size:13.6px;color:#000;letter-spacing:0.207px;">Longest session duration</div>
<div class="t" id="v5" style="left:570.20px;top:482.49px;font-size:13.6px;color:#000;letter-spacing:0.13px;">2min 31sec</div>
<div class="t" id="s6" style="left:327.20px;top:503.49px;font-size:13.6px;color:#000;letter-spacing:0.124px;">Keys in longest session</div>
<div class="t" id="v6" style="left:570.20px;top:503.49px;font-size:13.6px;color:#000;letter-spacing:-0.058px;">657</div>
<div class="t" id="s7" style="left:327.20px;top:524.49px;font-size:13.6px;color:#000;letter-spacing:0.135px;">Most keys in session</div>
<div class="t" id="v7" style="left:570.20px;top:524.49px;font-size:13.6px;color:#000;letter-spacing:-0.058px;">657</div>
<div class="t" id="s8" style="left:327.20px;top:545.49px;font-size:13.6px;color:#000;letter-spacing:0.222px;">Total unique keys</div>
<div class="t" id="v8" style="left:570.20px;top:545.49px;font-size:13.6px;color:#000;letter-spacing:-0.156px;">74</div>
<div class="t" id="s9" style="left:327.20px;top:566.49px;font-size:13.6px;color:#000;letter-spacing:0.375px;">Total time interval</div>
<div class="t" id="v9" style="left:570.20px;top:566.49px;font-size:13.6px;color:#000;letter-spacing:0.191px;">23h 39min 15sec</div>
<div class="a" style="left:357px;top:634px;width:1px;height:1px;background:#9a9a9a"></div>
</div>
<div class="a" style="left:0;top:40px;width:1px;height:788px;background:#d3d3d3"></div>
<div class="a" style="left:743px;top:37px;width:4px;height:791px;background:linear-gradient(90deg,#2c4f9a 0,#2c4f9a 1px,#3d6dc8 1px,#3d6dc8 3px,#3c3a36 3px)"></div>
<div class="a" style="left:0;top:824px;width:746px;height:4px;background:linear-gradient(#2c4f9a 0,#2c4f9a 1px,#3d6dc8 1px,#3d6dc8 3px,#3c3a36 3px)"></div>
</body></html>
